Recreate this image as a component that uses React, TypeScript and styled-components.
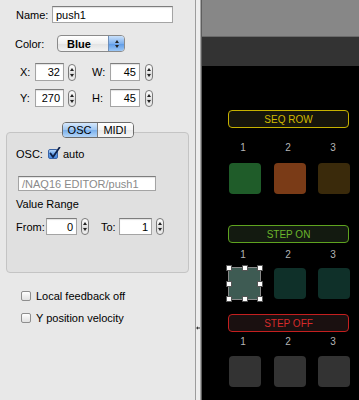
import styled, { createGlobalStyle } from "styled-components";

const Global = createGlobalStyle`
  html, body {
    margin: 0;
    padding: 0;
    background: #e8e8e8;
  }
  #root {
    width: 359px;
    height: 400px;
    overflow: hidden;
  }
`;

const Window = styled.div`
  display: flex;
  width: 359px;
  height: 400px;
  font-family: "Liberation Sans", Arial, sans-serif;
  font-size: 11px;
  color: #000;
`;

/* ---------- inspector ---------- */

const Panel = styled.div`
  width: 195px;
  flex-shrink: 0;
  display: flex;
  flex-direction: column;
  background: #e8e8e8;
  border-right: 1px solid #9c9c9c;
`;

const Row = styled.div<{ $mt: number; $pl: number; $h: number }>`
  display: flex;
  align-items: center;
  margin-top: ${(p) => p.$mt}px;
  padding-left: ${(p) => p.$pl}px;
  height: ${(p) => p.$h}px;
`;

const Label = styled.span<{ $w?: number; $ml?: number }>`
  display: inline-block;
  width: ${(p) => (p.$w ? `${p.$w}px` : "auto")};
  margin-left: ${(p) => p.$ml ?? 0}px;
  white-space: nowrap;
`;

const Field = styled.div<{ $w: number; $h: number; $right?: boolean; $muted?: boolean; $ml?: number }>`
  box-sizing: border-box;
  width: ${(p) => p.$w}px;
  height: ${(p) => p.$h}px;
  margin-left: ${(p) => p.$ml ?? 0}px;
  display: flex;
  align-items: center;
  justify-content: ${(p) => (p.$right ? "flex-end" : "flex-start")};
  padding: 0 3px;
  background: #fff;
  border: 1px solid #a4a4a4;
  border-top-color: #7d7d7d;
  box-shadow: inset 0 1px 1px rgba(0, 0, 0, 0.12);
  color: ${(p) => (p.$muted ? "#8a8a8a" : "#000")};
  white-space: nowrap;
  overflow: hidden;
`;

const StepperBox = styled.div<{ $ml: number }>`
  box-sizing: border-box;
  width: 8px;
  height: 17px;
  margin-left: ${(p) => p.$ml}px;
  border: 1px solid #7a7a7a;
  border-radius: 4px;
  background: linear-gradient(#ffffff, #e3e3e3 50%, #d6d6d6 51%, #f2f2f2);
  display: flex;
  flex-direction: column;
  justify-content: space-between;
  align-items: center;
  padding: 3px 0;
`;

const Tri = styled.span<{ $up?: boolean }>`
  width: 0;
  height: 0;
  border-left: 2px solid transparent;
  border-right: 2px solid transparent;
  ${(p) => (p.$up ? "border-bottom: 3px solid #222;" : "border-top: 3px solid #222;")}
`;

function Stepper({ ml }: { ml: number }) {
  return (
    <StepperBox $ml={ml}>
      <Tri $up />
      <Tri />
    </StepperBox>
  );
}

const Popup = styled.div`
  box-sizing: border-box;
  width: 68px;
  height: 17px;
  display: flex;
  border: 1px solid #8a8a8a;
  border-radius: 4px;
  background: linear-gradient(#ffffff, #efefef 50%, #e2e2e2 51%, #f3f3f3);
  overflow: hidden;
`;

const PopupText = styled.div`
  flex: 1;
  display: flex;
  align-items: center;
  padding-left: 9px;
  font-weight: bold;
`;

const PopupArrows = styled.div`
  width: 15px;
  border-left: 1px solid #6f8fb8;
  background: linear-gradient(#c9e0fa, #7fb1ee 50%, #5c99e6 51%, #9cc7f5);
  display: flex;
  flex-direction: column;
  justify-content: center;
  align-items: center;
  gap: 2px;
`;

const GroupWrap = styled.div`
  display: flex;
  flex-direction: column;
  align-items: center;
  margin-top: 15px;
`;

const Segments = styled.div`
  position: relative;
  z-index: 1;
  display: flex;
  height: 16px;
  box-sizing: border-box;
  border: 1px solid #6c6c6c;
  border-radius: 4px;
  overflow: hidden;
`;

const Segment = styled.div<{ $active?: boolean; $w: number }>`
  width: ${(p) => p.$w}px;
  display: flex;
  align-items: center;
  justify-content: center;
  & + & {
    border-left: 1px solid #7a7a7a;
  }
  background: ${(p) =>
    p.$active
      ? "linear-gradient(#d6e8fc, #9ec6f2 50%, #7ab0ec 51%, #b3d5f8)"
      : "linear-gradient(#ffffff, #f4f4f4 50%, #e8e8e8 51%, #f6f6f6)"};
`;

const GroupBox = styled.div`
  box-sizing: border-box;
  align-self: stretch;
  margin: -6px 6px 0;
  height: 141px;
  display: flex;
  flex-direction: column;
  background: #e0e0e0;
  border: 1px solid #c4c4c4;
  border-radius: 4px;
`;

const Check = styled.span<{ $checked?: boolean; $size: number }>`
  position: relative;
  box-sizing: border-box;
  width: ${(p) => p.$size}px;
  height: ${(p) => p.$size}px;
  flex-shrink: 0;
  border: 1px solid ${(p) => (p.$checked ? "#3a63a6" : "#8e8e8e")};
  border-radius: 2px;
  background: ${(p) =>
    p.$checked
      ? "linear-gradient(#b4d4f8, #5f9ce6 55%, #4a8ae0)"
      : "linear-gradient(#ffffff, #ececec 60%, #e2e2e2)"};
  & > svg {
    position: absolute;
    left: 0;
    top: -3px;
  }
`;

const Splitter = styled.div`
  width: 4px;
  flex-shrink: 0;
  background: #ededed;
  border-right: 1px solid #a6a6a6;
  display: flex;
  flex-direction: column;
  & > svg {
    margin-top: 326px;
  }
`;

/* ---------- canvas ---------- */

const Canvas = styled.div`
  flex: 1;
  display: flex;
  flex-direction: column;
  border-left: 1px solid #5e5e5e;
  background: #000;
`;

const TopBar = styled.div`
  height: 36px;
  flex-shrink: 0;
  background: #878787;
`;

const ToolStrip = styled.div`
  height: 29px;
  flex-shrink: 0;
  background: #333;
  border-top: 1px solid #6a6a6a;
`;

const Stage = styled.div`
  flex: 1;
  display: flex;
  flex-direction: column;
  padding-left: 26px;
  background: #000;
`;

const Tag = styled.div<{ $mt: number; $line: string; $fill: string; $text: string }>`
  box-sizing: border-box;
  width: 121px;
  height: 18px;
  margin-top: ${(p) => p.$mt}px;
  border: 1.5px solid ${(p) => p.$line};
  border-radius: 4px;
  background: ${(p) => p.$fill};
  color: ${(p) => p.$text};
  font-size: 10px;
  display: flex;
  align-items: center;
  justify-content: center;
`;

const Numbers = styled.div<{ $mt: number }>`
  display: grid;
  grid-template-columns: repeat(3, 30px);
  column-gap: 15px;
  height: 12px;
  margin-top: ${(p) => p.$mt}px;
  color: #b5b5b5;
  font-size: 10px;
  line-height: 12px;
  text-align: center;
`;

const Pads = styled.div<{ $mt: number }>`
  display: grid;
  grid-template-columns: repeat(3, 32px);
  column-gap: 12.5px;
  margin-top: ${(p) => p.$mt}px;
  margin-left: 1px;
`;

const Pad = styled.div<{ $color: string; $selected?: boolean }>`
  position: relative;
  box-sizing: border-box;
  height: 31px;
  border-radius: ${(p) => (p.$selected ? 0 : 4)}px;
  background: ${(p) => p.$color};
  border: ${(p) => (p.$selected ? "1px solid #8a8a8a" : "none")};
  ${(p) => (p.$selected ? "margin: -1px 0 0 -1px; height: 33px; width: 33px;" : "")}
`;

const Handle = styled.span<{ $x: number; $y: number }>`
  position: absolute;
  left: ${(p) => p.$x}%;
  top: ${(p) => p.$y}%;
  width: 4px;
  height: 4px;
  background: #fff;
  border: 0.5px solid #555;
  transform: translate(-50%, -50%);
`;

const handleSpots = [
  [0, 0], [50, 0], [100, 0],
  [0, 50], [100, 50],
  [0, 100], [50, 100], [100, 100],
];

function NumberRow({ mt }: { mt: number }) {
  return (
    <Numbers $mt={mt}>
      <span>1</span>
      <span>2</span>
      <span>3</span>
    </Numbers>
  );
}

export default function App() {
  return (
    <>
      <Global />
      <Window>
        <Panel>
          <Row $mt={6} $pl={16} $h={17}>
            <Label $w={36}>Name:</Label>
            <Field $w={121} $h={17}>push1</Field>
          </Row>

          <Row $mt={12} $pl={15} $h={17}>
            <Label $w={42}>Color:</Label>
            <Popup>
              <PopupText>Blue</PopupText>
              <PopupArrows>
                <Tri $up />
                <Tri />
              </PopupArrows>
            </Popup>
          </Row>

          <Row $mt={11} $pl={20} $h={18}>
            <Label $w={15}>X:</Label>
            <Field $w={29} $h={18} $right>32</Field>
            <Stepper ml={4} />
            <Label $w={18} $ml={16}>W:</Label>
            <Field $w={30} $h={18} $right>45</Field>
            <Stepper ml={5} />
          </Row>

          <Row $mt={8} $pl={20} $h={18}>
            <Label $w={15}>Y:</Label>
            <Field $w={29} $h={18} $right>270</Field>
            <Stepper ml={4} />
            <Label $w={18} $ml={16}>H:</Label>
            <Field $w={30} $h={18} $right>45</Field>
            <Stepper ml={5} />
          </Row>

          <GroupWrap>
            <Segments>
              <Segment $active $w={34}>OSC</Segment>
              <Segment $w={35}>MIDI</Segment>
            </Segments>
            <GroupBox>
              <Row $mt={15} $pl={9} $h={11}>
                <Label $w={32}>OSC:</Label>
                <Check $checked $size={10}>
                  <svg width="12" height="12" viewBox="0 0 12 12">
                    <path
                      d="M1.5 6.5 L4 10 L10.5 0.5"
                      fill="none"
                      stroke="#10224a"
                      strokeWidth="1.8"
                      strokeLinecap="round"
                      strokeLinejoin="round"
                    />
                  </svg>
                </Check>
                <Label $ml={5}>auto</Label>
              </Row>

              <Row $mt={17} $pl={11} $h={15}>
                <Field $w={138} $h={15} $muted>/NAQ16 EDITOR/push1</Field>
              </Row>

              <Row $mt={7} $pl={9} $h={12}>
                <Label>Value Range</Label>
              </Row>

              <Row $mt={8} $pl={9} $h={17}>
                <Label $w={30}>From:</Label>
                <Field $w={31} $h={17} $right>0</Field>
                <Stepper ml={4} />
                <Label $w={18} $ml={12}>To:</Label>
                <Field $w={33} $h={17} $right>1</Field>
                <Stepper ml={4} />
              </Row>
            </GroupBox>
          </GroupWrap>

          <Row $mt={18} $pl={21} $h={10}>
            <Check $size={10} />
            <Label $ml={5}>Local feedback off</Label>
          </Row>
          <Row $mt={12} $pl={21} $h={10}>
            <Check $size={10} />
            <Label $ml={5}>Y position velocity</Label>
          </Row>
        </Panel>

        <Splitter>
          <svg width="4" height="4" viewBox="0 0 4 4">
            <path d="M0 2 L2 0.3 L2 3.7 Z M2 1.5 H4 V2.5 H2 Z" fill="#333" />
          </svg>
        </Splitter>

        <Canvas>
          <TopBar />
          <ToolStrip />
          <Stage>
            <Tag $mt={44} $line="#c6b200" $fill="#16150c" $text="#d2ba00">SEQ ROW</Tag>
            <NumberRow mt={14} />
            <Pads $mt={9}>
              <Pad $color="#1f5c29" />
              <Pad $color="#7a3b17" />
              <Pad $color="#3a2a0b" />
            </Pads>

            <Tag $mt={31} $line="#5ea31f" $fill="#131a10" $text="#6bb52c">STEP ON</Tag>
            <NumberRow mt={6} />
            <Pads $mt={7}>
              <Pad $color="#3e5b53" $selected>
                {handleSpots.map(([x, y]) => (
                  <Handle key={`${x}-${y}`} $x={x} $y={y} />
                ))}
              </Pad>
              <Pad $color="#0f3029" />
              <Pad $color="#0f3029" />
            </Pads>

            <Tag $mt={14} $line="#c41f1f" $fill="#1a1010" $text="#d62b2b">STEP OFF</Tag>
            <NumberRow mt={4} />
            <Pads $mt={8}>
              <Pad $color="#333" />
              <Pad $color="#333" />
              <Pad $color="#333" />
            </Pads>
          </Stage>
        </Canvas>
      </Window>
    </>
  );
}
